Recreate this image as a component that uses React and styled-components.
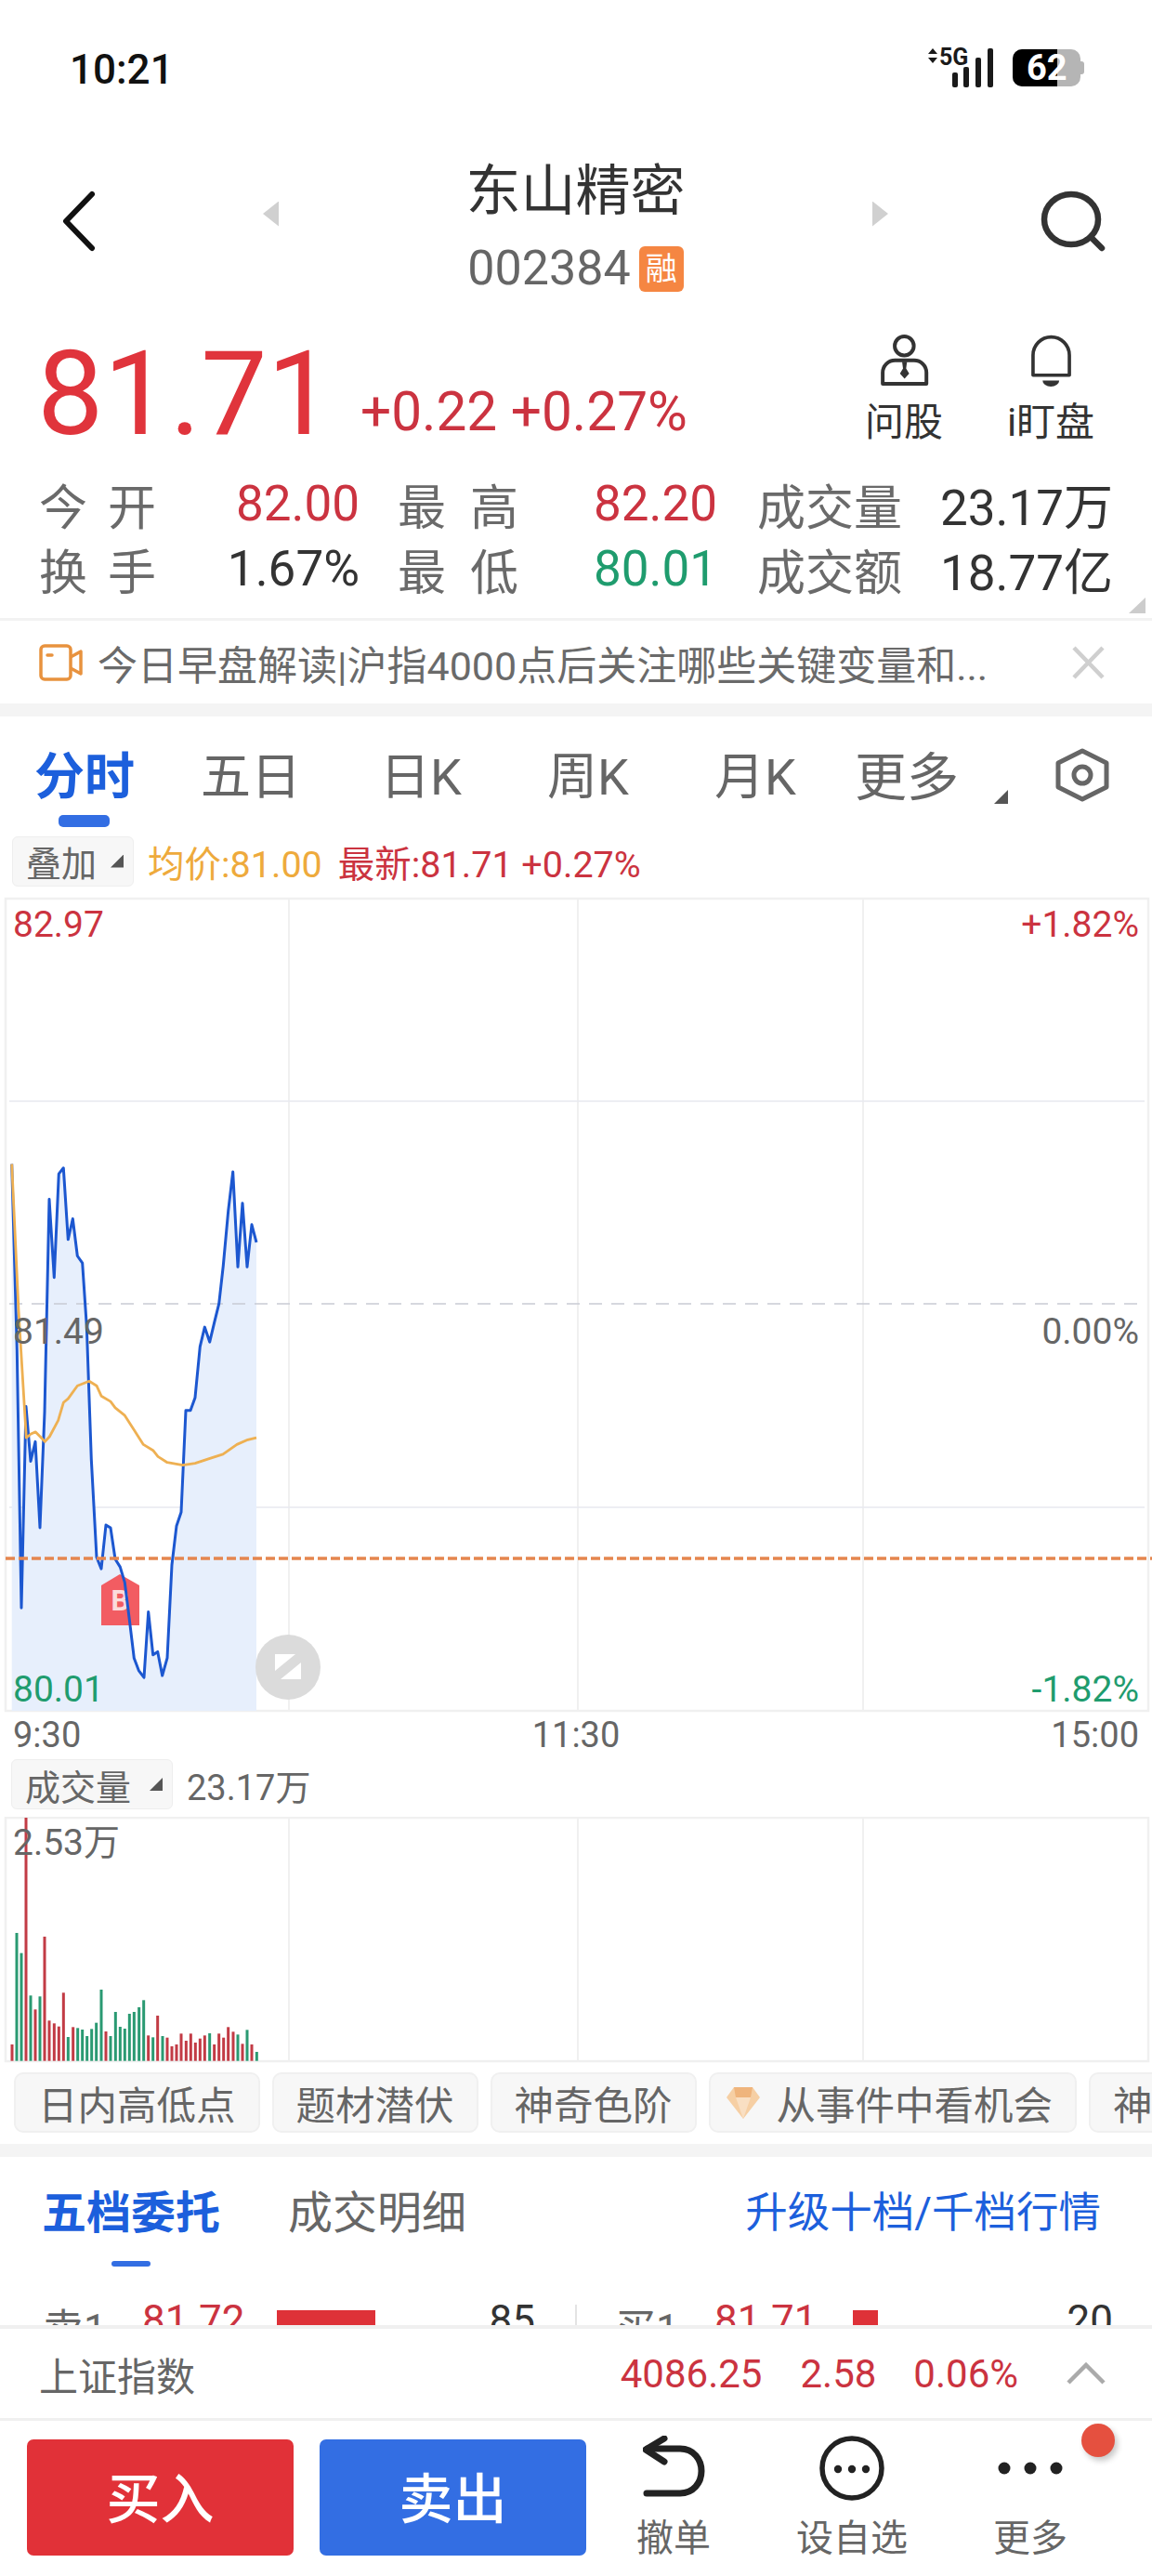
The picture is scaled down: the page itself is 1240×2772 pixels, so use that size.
import React from "react";
import styled, { createGlobalStyle } from "styled-components";

const RED = "#cb3340";
const GREEN = "#1f9c6e";
const BLUE = "#1c5fdc";
const GRAY = "#666";

const GlobalStyle = createGlobalStyle`
  html, body {
    margin: 0;
    padding: 0;
    background: #fff;
  }
  * {
    box-sizing: border-box;
  }
`;

const Page = styled.div`
  width: 1240px;
  height: 2772px;
  display: flex;
  flex-direction: column;
  overflow: hidden;
  background: #fff;
  color: #333;
  font-family: Roboto, "Noto Sans CJK SC", sans-serif;
`;

const Main = styled.div`
  height: 2502px;
  flex: none;
  overflow: hidden;
`;

/* status bar */
const StatusBar = styled.div`
  height: 146px;
  display: flex;
  align-items: center;
  justify-content: space-between;
  padding: 0 77px 0 75px;
`;

const Clock = styled.span`
  font-size: 44px;
  font-weight: 500;
  color: #111;
  padding-top: 4px;
`;

const StatusRight = styled.div`
  display: flex;
  align-items: center;
  gap: 19px;
`;

const Battery = styled.div`
  position: relative;
  width: 73px;
  height: 40px;
  border-radius: 10px;
  background: #b5b5b5;
  &::before {
    content: "";
    position: absolute;
    left: 0;
    top: 0;
    bottom: 0;
    width: 48px;
    border-radius: 10px 0 0 10px;
    background: #000;
  }
  &::after {
    content: "";
    position: absolute;
    right: -4px;
    top: 13px;
    width: 4px;
    height: 14px;
    border-radius: 0 3px 3px 0;
    background: #b5b5b5;
  }
`;

const BatteryText = styled.span`
  position: absolute;
  left: 15px;
  top: 0;
  line-height: 40px;
  color: #fff;
  font-size: 38px;
  font-weight: 700;
`;

/* header */
const Header = styled.div`
  height: 184px;
  display: flex;
  align-items: center;
  padding: 0 50px 0 66px;
`;

const NavArrow = styled.div`
  width: 17px;
  height: 27px;
  margin-left: ${(p) => p.$gap || 0}px;
  margin-top: -16px;
  background: #d0d0d0;
  clip-path: ${(p) =>
    p.$right ? "polygon(0 0, 100% 50%, 0 100%)" : "polygon(100% 0, 0 50%, 100% 100%)"};
`;

const TitleBlock = styled.div`
  flex: 1;
  display: flex;
  flex-direction: column;
  align-items: center;
  margin-top: 10px;
`;

const Title = styled.div`
  font-size: 59px;
  line-height: 72px;
  color: #333;
`;

const CodeRow = styled.div`
  display: flex;
  align-items: center;
  gap: 9px;
  margin-top: 20px;
`;

const Code = styled.span`
  font-size: 52px;
  line-height: 54px;
  color: ${GRAY};
`;

const MarginTag = styled.span`
  width: 48px;
  height: 49px;
  border-radius: 6px;
  background: #f58642;
  color: #fff;
  font-size: 34px;
  line-height: 49px;
  text-align: center;
`;

const SearchWrap = styled.div`
  margin-left: 164px;
  display: flex;
`;

/* price */
const PriceRow = styled.div`
  height: 177px;
  display: flex;
  padding: 0 0 0 40px;
`;

const PriceGroup = styled.div`
  display: flex;
  align-items: flex-end;
  gap: 29px;
  height: 148px;
  margin-top: 20px;
`;

const BigPrice = styled.span`
  font-size: 127px;
  line-height: 148px;
  color: #e0343c;
`;

const Change = styled.span`
  font-size: 58.5px;
  line-height: 60px;
  margin-bottom: 25px;
  color: ${RED};
`;

const Actions = styled.div`
  margin-left: auto;
  display: flex;
  padding: 29px 30px 0 0;
`;

const Action = styled.div`
  width: 158px;
  display: flex;
  flex-direction: column;
  align-items: center;
  gap: 10px;
  font-size: 42px;
  line-height: 56px;
  color: #333;
`;

/* stats */
const Stats = styled.div`
  position: relative;
  height: 158px;
  display: grid;
  grid-template-columns: 126px 219px 171px 214px 200px 226px;
  grid-auto-rows: 70px;
  padding-left: 42px;
  align-items: center;
  font-size: 53px;
`;

const StatLabel = styled.div`
  display: flex;
  justify-content: space-between;
  padding-left: ${(p) => p.$pad || 0}px;
  color: #6a6a6a;
  font-size: 52px;
`;

const StatValue = styled.div`
  text-align: right;
  color: ${(p) => p.$color || "#333"};
`;

const CornerMark = styled.div`
  position: absolute;
  right: 7px;
  top: 136px;
  width: 18px;
  height: 17px;
  background: #ccc;
  clip-path: polygon(100% 0, 100% 100%, 0 100%);
`;

/* banner */
const Banner = styled.div`
  height: 92px;
  display: flex;
  align-items: center;
  padding: 0 50px 0 42px;
  border-top: 3px solid #f2f2f2;
`;

const BannerText = styled.span`
  flex: 1;
  margin-left: 15px;
  font-size: 43px;
  color: #6a6a6a;
  white-space: nowrap;
`;

const GapBar = styled.div`
  height: 14px;
  background: #f4f4f4;
`;

/* period tabs */
const PeriodTabs = styled.div`
  height: 122px;
  display: grid;
  grid-template-columns: 179px 193px 180px 180px 151px 150px 65px 60px;
  align-items: center;
  padding: 0 0 2px 37px;
  svg {
    margin-top: 6px;
  }
`;

const PeriodTab = styled.div`
  position: relative;
  font-size: ${(p) => p.$size || 54}px;
  font-weight: ${(p) => (p.$active ? 700 : 400)};
  color: ${(p) => (p.$active ? BLUE : GRAY)};
  &::after {
    content: "";
    display: ${(p) => (p.$active ? "block" : "none")};
    position: absolute;
    left: 26px;
    bottom: -19px;
    width: 55px;
    height: 13px;
    border-radius: 5px;
    background: #336ee3;
  }
`;

const DownMark = styled.span`
  display: inline-block;
  flex: none;
  width: ${(p) => p.$size || 15}px;
  height: ${(p) => p.$size || 15}px;
  background: #555;
  clip-path: polygon(100% 0, 100% 100%, 0 100%);
`;

const TabMark = styled(DownMark)`
  align-self: end;
  margin-bottom: 26px;
`;

/* chart legend */
const LegendRow = styled.div`
  height: 67px;
  display: flex;
  align-items: center;
  padding-left: 13px;
  font-size: 39.5px;
`;

const SelectBtn = styled.div`
  height: 54px;
  display: flex;
  align-items: center;
  gap: ${(p) => p.$gap}px;
  padding: 0 10px 0 14px;
  background: #f7f7f7;
  border: 1px solid #eee;
  border-radius: 6px;
  font-size: 38px;
  color: ${GRAY};
`;

const LegendText = styled.span`
  margin-left: ${(p) => p.$gap}px;
  color: ${(p) => p.$color};
`;

const ChartBox = styled.div`
  position: relative;
  height: ${(p) => p.$h}px;
  svg {
    display: block;
  }
`;

const ChartLabel = styled.span`
  position: absolute;
  top: ${(p) => p.$top}px;
  ${(p) => (p.$right ? "right: 14px;" : "left: 14px;")}
  font-size: 39px;
  line-height: 44px;
  color: ${(p) => p.$color || GRAY};
`;

const TimeAxis = styled.div`
  height: 40px;
  display: grid;
  grid-template-columns: 1fr auto 1fr;
  padding: 0 14px;
  font-size: 38px;
  line-height: 44px;
  color: ${GRAY};
  span:last-child {
    text-align: right;
  }
`;

const VolumeHead = styled(LegendRow)`
  height: 70px;
  padding-left: 12px;
  font-size: 38px;
`;

/* chips */
const ChipRow = styled.div`
  height: 87px;
  display: flex;
  gap: 13px;
  padding: 10px 0 0 15px;
  overflow: hidden;
`;

const Chip = styled.div`
  flex: none;
  height: 65px;
  display: flex;
  align-items: center;
  gap: 17px;
  padding: 0 ${(p) => (p.$icon ? 24 : 24)}px 0 ${(p) => (p.$icon ? 16 : 24)}px;
  background: #f7f7f7;
  border: 2px solid #f0f0f0;
  border-radius: 10px;
  font-size: 42.5px;
  color: ${GRAY};
  white-space: nowrap;
`;

/* depth tabs */
const DepthTabs = styled.div`
  height: 129px;
  display: flex;
  padding: 0 55px 18px 45px;
  align-items: center;
  font-size: 48px;
`;

const DepthTab = styled.div`
  position: relative;
  margin-right: 73px;
  font-weight: ${(p) => (p.$active ? 700 : 400)};
  color: ${(p) => (p.$active ? BLUE : GRAY)};
  &::after {
    content: "";
    display: ${(p) => (p.$active ? "block" : "none")};
    position: absolute;
    left: 75px;
    bottom: -27px;
    width: 42px;
    height: 6px;
    border-radius: 3px;
    background: #336ee3;
  }
`;

const UpgradeLink = styled.div`
  margin-left: auto;
  font-size: 45.5px;
  color: #1c5fdc;
`;

const DepthRow = styled.div`
  display: grid;
  grid-template-columns: 107px 145px 228px 50px 86px 107px 149px 230px 50px;
  align-items: start;
  padding: 21px 0 0 46px;
  height: 90px;
  font-size: 44px;
`;

const DepthLabel = styled.span`
  color: ${GRAY};
`;

const DepthPrice = styled.span`
  color: ${RED};
`;

const DepthBar = styled.div`
  height: 20px;
  width: ${(p) => p.$w}px;
  margin-top: 15px;
  background: #de3138;
`;

const DepthQty = styled.span`
  color: #333;
  text-align: right;
`;

const DepthRule = styled.div`
  width: 2px;
  height: 30px;
  margin: 9px 0 0 43px;
  background: #e4e4e4;
`;

/* dock */
const Dock = styled.div`
  flex: 1;
  display: flex;
  flex-direction: column;
`;

const IndexRow = styled.div`
  height: 103px;
  display: flex;
  align-items: center;
  padding: 0 50px 0 42px;
  border-top: 4px solid #f0f0f0;
  border-bottom: 3px solid #f0f0f0;
  font-size: 42px;
`;

const IndexName = styled.span`
  color: ${GRAY};
  margin-right: auto;
`;

const IndexValue = styled.span`
  color: ${RED};
  margin-right: ${(p) => p.$gap}px;
`;

const TradeBar = styled.div`
  position: relative;
  flex: 1;
  display: flex;
  padding: 20px 0 0 29px;
`;

const TradeBtn = styled.div`
  width: 287px;
  height: 125px;
  margin-right: 28px;
  padding-top: 6px;
  border-radius: 7px;
  background: ${(p) => p.$bg};
  color: #fff;
  font-size: 58px;
  font-weight: 500;
  line-height: 119px;
  text-align: center;
`;

const TradeAction = styled.div`
  width: 192px;
  height: 134px;
  display: flex;
  flex-direction: column;
  align-items: center;
  justify-content: space-between;
  font-size: 40px;
  line-height: 46px;
  color: ${GRAY};
  svg {
    display: block;
  }
`;

const ActionsGroup = styled.div`
  display: flex;
  margin-left: -30px;
  margin-top: -4px;
`;

const RedDot = styled.div`
  position: absolute;
  left: 1164px;
  top: 3px;
  width: 36px;
  height: 36px;
  border-radius: 50%;
  background: #e5503f;
  box-shadow: 3px 4px 6px rgba(0, 0, 0, 0.22);
`;

/* drawings */
const SignalIcon = () => (
  <svg width="74" height="46" viewBox="998 51 74 46">
    <path d="M1005 53l5 6h-10zM1005 69l5-6h-10z" fill="#1a1a1a" />
    <text x="1012" y="71" fontFamily="Roboto" fontSize="25" fontWeight="700" fill="#1a1a1a">5G</text>
    <rect x="1026" y="79" width="6" height="16" rx="2" fill="#1a1a1a" />
    <rect x="1038" y="73" width="6" height="22" rx="2" fill="#1a1a1a" />
    <rect x="1051" y="63" width="6" height="32" rx="2" fill="#1a1a1a" />
    <rect x="1064" y="53" width="6" height="42" rx="2" fill="#1a1a1a" />
  </svg>
);

const BackIcon = () => (
  <svg width="37" height="66" viewBox="0 0 37 66" fill="none" stroke="#111" strokeWidth="6" strokeLinecap="round" strokeLinejoin="round">
    <path d="M33 4 L5 33 L33 62" />
  </svg>
);

const SearchIcon = () => (
  <svg width="70" height="66" viewBox="0 0 70 66" fill="none" stroke="#333" strokeWidth="6.5" strokeLinecap="round">
    <ellipse cx="33" cy="31" rx="29" ry="27" />
    <path d="M54 50 L66 62" />
  </svg>
);

const AskIcon = () => (
  <svg width="55" height="58" viewBox="140 55 165 175">
    <circle cx="222" cy="95" r="31" fill="none" stroke="#333" strokeWidth="12" />
    <path d="M152 218 V182 a40 40 0 0 1 40 -40 h62 a40 40 0 0 1 40 40 V218 Z" fill="none" stroke="#333" strokeWidth="12" strokeLinejoin="round" />
    <path d="M215 146 h16 l-3 22 l10 17 l-15 16 l-15 -16 l10 -17 Z" fill="#333" />
  </svg>
);

const BellIcon = () => (
  <svg width="47" height="58" viewBox="630 55 140 175">
    <path d="M641 190 V125 a59 59 0 0 1 118 0 V190 Z" fill="none" stroke="#333" strokeWidth="11" strokeLinejoin="round" />
    <path d="M672 207 h54 a27 20 0 0 1 -54 0 Z" fill="#333" />
  </svg>
);

const VideoIcon = () => (
  <svg width="48" height="42" viewBox="0 0 48 42" fill="none" stroke="#e8923e" strokeWidth="3.5" strokeLinejoin="round">
    <rect x="2" y="3" width="32" height="36" rx="4" />
    <path d="M34 15 L45 9 V33 L34 27" />
    <path d="M9 13 h5" strokeLinecap="round" />
  </svg>
);

const CloseIcon = () => (
  <svg width="37" height="36" viewBox="0 0 37 36" stroke="#cfcfcf" strokeWidth="4.5">
    <path d="M3 2 L34 34 M34 2 L3 34" />
  </svg>
);

const HexIcon = () => (
  <svg width="60" height="58" viewBox="0 0 60 58" fill="none" stroke="#666" strokeWidth="5" strokeLinejoin="round">
    <path d="M30 3 L56 16 V42 L30 55 L4 42 V16 Z" />
    <circle cx="30" cy="29" r="9" />
  </svg>
);

const DiamondIcon = () => (
  <svg width="38" height="36" viewBox="0 0 38 36">
    <path d="M9 1 H29 L37 12 L19 35 L1 12 Z" fill="#f6cfa4" />
    <path d="M9 1 H29 L27 12 H11 Z" fill="#efb47c" />
    <path d="M11 12 H27 L19 35 Z" fill="#f9dfc3" />
  </svg>
);

const ChevronUp = () => (
  <svg width="42" height="24" viewBox="0 0 42 24" fill="none" stroke="#aaa" strokeWidth="4.5">
    <path d="M2 22 L21 3 L40 22" />
  </svg>
);

const UndoIcon = () => (
  <svg width="67" height="66" viewBox="0 0 67 66" fill="none" stroke="#222" strokeWidth="7" strokeLinecap="round" strokeLinejoin="round">
    <path d="M23 3 L3 15 L23 28" />
    <path d="M5 14 H40 C55 14 63 26 63 38 C63 51 54 62 40 62 H4" />
  </svg>
);

const MoreCircleIcon = () => (
  <svg width="70" height="70" viewBox="0 0 70 70">
    <circle cx="35" cy="35" r="32" fill="none" stroke="#222" strokeWidth="5.5" />
    <circle cx="20" cy="36" r="4.2" fill="#222" />
    <circle cx="35" cy="36" r="4.2" fill="#222" />
    <circle cx="50" cy="36" r="4.2" fill="#222" />
  </svg>
);

const DotsIcon = () => (
  <svg width="70" height="70" viewBox="0 0 70 70" fill="#222">
    <circle cx="7" cy="35" r="6.5" />
    <circle cx="35" cy="35" r="6.5" />
    <circle cx="63" cy="35" r="6.5" />
  </svg>
);

/* traced from the reference, x/3 and 1200+y/2.376 give page coordinates */
const bluePts = [[38,125],[55,600],[69,1260],[84,745],[99,885],[114,835],[129,1055],[144,760],[159,215],[175,415],[190,150],[205,135],[220,318],[235,265],[250,360],[266,378],[280,540],[295,880],[312,1130],[327,1160],[342,1048],[357,1055],[372,1135],[388,1155],[403,1195],[418,1290],[433,1388],[448,1420],[465,1438],[479,1270],[494,1380],[509,1372],[524,1433],[540,1388],[555,1150],[570,1050],[585,1015],[600,755],[615,755],[630,722],[646,592],[661,542],[677,580],[692,530],[707,482],[721,385],[737,245],[752,145],[768,388],[783,225],[798,388],[813,280],[828,325]];
const avgPts = [[38,125],[60,500],[85,825],[100,815],[115,810],[130,822],[145,835],[160,822],[188,780],[205,735],[220,725],[250,692],[288,680],[312,692],[327,718],[357,732],[372,748],[403,768],[433,805],[463,842],[494,857],[510,873],[540,888],[590,895],[630,890],[680,877],[720,867],[765,842],[800,830],[828,825]];

const toPage = ([x, y]) => `${(x / 3).toFixed(1)},${(1200 + y / 2.376).toFixed(1)}`;
const bluePath = bluePts.map(toPage).join(" ");
const avgPath = avgPts.map(toPage).join(" ");

const volumes = [
  [39,1020,"r"],[54,660,"g"],[69,725,"g"],[84,288,"r"],[99,862,"g"],[114,907,"r"],[129,865,"g"],[144,672,"r"],[159,943,"r"],[175,952,"r"],[190,962,"r"],[205,853,"r"],[220,996,"g"],[236,964,"r"],[251,967,"g"],[266,972,"g"],[281,993,"g"],[296,970,"g"],[311,950,"g"],[327,843,"g"],[342,978,"r"],[357,993,"g"],[373,915,"g"],[388,963,"g"],[403,969,"g"],[418,921,"g"],[433,915,"g"],[449,900,"g"],[464,877,"g"],[479,991,"r"],[494,997,"g"],[509,927,"r"],[525,993,"g"],[540,998,"r"],[555,1026,"r"],[570,1020,"r"],[585,985,"r"],[601,1008,"r"],[616,985,"r"],[631,1014,"r"],[646,1001,"r"],[661,991,"r"],[677,984,"g"],[692,1020,"r"],[707,985,"r"],[722,998,"r"],[737,964,"r"],[753,979,"r"],[768,988,"g"],[783,1018,"r"],[798,973,"g"],[813,1020,"r"],[829,1044,"g"],
];

const PriceChart = () => (
  <svg width="1240" height="885" viewBox="0 960 1240 885">
    <rect x="6" y="967" width="1230" height="874" fill="none" stroke="#f0f0f0" strokeWidth="2.5" />
    <path d="M311 967V1841M622 967V1841M929 967V1841" stroke="#f0f0f0" strokeWidth="2" />
    <path d="M10 1185H1232M10 1622H1232" stroke="#e8e9ef" strokeWidth="1.5" />
    <polygon points={`12.7,1841 ${bluePath} 276,1841`} fill="#e7effc" />
    <path d="M10 1403H1232" stroke="#c9ccd4" strokeWidth="1.5" strokeDasharray="14 10" />
    <path d="M109 1706 L129 1694 L150 1706 V1749 H109 Z" fill="#f25c62" />
    <text x="129.5" y="1733" textAnchor="middle" fontFamily="Roboto" fontSize="31" fontWeight="700" fill="#fbdcdc">B</text>
    <polyline points={bluePath} fill="none" stroke="#1c57d0" strokeWidth="3" strokeLinejoin="round" />
    <polyline points={avgPath} fill="none" stroke="#eeb052" strokeWidth="2.8" strokeLinejoin="round" />
    <path d="M6 1677H1240" stroke="#e5864f" strokeWidth="3.6" strokeDasharray="10 4" />
    <circle cx="310" cy="1794" r="35" fill="#d9d9d9" opacity="0.95" />
    <path d="M296 1780H318L296 1798ZM324 1789V1807H302Z" fill="#fff" />
  </svg>
);

const VolumeChart = () => (
  <svg width="1240" height="265" viewBox="0 1955 1240 265">
    <rect x="6" y="1956" width="1230" height="262" fill="none" stroke="#f0f0f0" strokeWidth="2.5" />
    <path d="M311 1956V2218M622 1956V2218M929 1956V2218" stroke="#f0f0f0" strokeWidth="2" />
    {volumes.map(([x, y, c]) => (
      <rect
        key={x}
        x={x / 3 - 1.5}
        y={1860 + y / 3}
        width="3"
        height={2217.7 - (1860 + y / 3)}
        fill={c === "r" ? "#c23b45" : "#2a9a72"}
      />
    ))}
  </svg>
);

const App = () => (
  <Page>
    <GlobalStyle />
    <Main>
      <StatusBar>
        <Clock>10:21</Clock>
        <StatusRight>
          <SignalIcon />
          <Battery>
            <BatteryText>62</BatteryText>
          </Battery>
        </StatusRight>
      </StatusBar>

      <Header>
        <BackIcon />
        <NavArrow $gap={180} />
        <TitleBlock>
          <Title>东山精密</Title>
          <CodeRow>
            <Code>002384</Code>
            <MarginTag>融</MarginTag>
          </CodeRow>
        </TitleBlock>
        <NavArrow $right />
        <SearchWrap>
          <SearchIcon />
        </SearchWrap>
      </Header>

      <PriceRow>
        <PriceGroup>
          <BigPrice>81.71</BigPrice>
          <Change>+0.22 +0.27%</Change>
        </PriceGroup>
        <Actions>
          <Action>
            <AskIcon />
            问股
          </Action>
          <Action>
            <BellIcon />
            i盯盘
          </Action>
        </Actions>
      </PriceRow>

      <Stats>
        <StatLabel><span>今</span><span>开</span></StatLabel>
        <StatValue $color={RED}>82.00</StatValue>
        <StatLabel $pad={41}><span>最</span><span>高</span></StatLabel>
        <StatValue $color={RED}>82.20</StatValue>
        <StatLabel $pad={43}>成交量</StatLabel>
        <StatValue>23.17万</StatValue>
        <StatLabel><span>换</span><span>手</span></StatLabel>
        <StatValue>1.67%</StatValue>
        <StatLabel $pad={41}><span>最</span><span>低</span></StatLabel>
        <StatValue $color={GREEN}>80.01</StatValue>
        <StatLabel $pad={43}>成交额</StatLabel>
        <StatValue>18.77亿</StatValue>
        <CornerMark />
      </Stats>

      <Banner>
        <VideoIcon />
        <BannerText>今日早盘解读|沪指4000点后关注哪些关键变量和...</BannerText>
        <CloseIcon />
      </Banner>
      <GapBar />

      <PeriodTabs>
        <PeriodTab $active>分时</PeriodTab>
        <PeriodTab>五日</PeriodTab>
        <PeriodTab>日K</PeriodTab>
        <PeriodTab>周K</PeriodTab>
        <PeriodTab>月K</PeriodTab>
        <PeriodTab $size={56}>更多</PeriodTab>
        <TabMark />
        <HexIcon />
      </PeriodTabs>

      <LegendRow>
        <SelectBtn $gap={15}>
          叠加
          <DownMark $size={14} />
        </SelectBtn>
        <LegendText $gap={15} $color="#eeaa3c">均价:81.00</LegendText>
        <LegendText $gap={17} $color={RED}>最新:81.71 +0.27%</LegendText>
      </LegendRow>

      <ChartBox $h={885}>
        <PriceChart />
        <ChartLabel $top={13} $color={RED}>82.97</ChartLabel>
        <ChartLabel $top={13} $right $color={RED}>+1.82%</ChartLabel>
        <ChartLabel $top={451}>81.49</ChartLabel>
        <ChartLabel $top={451} $right>0.00%</ChartLabel>
        <ChartLabel $top={836} $color={GREEN}>80.01</ChartLabel>
        <ChartLabel $top={836} $right $color={GREEN}>-1.82%</ChartLabel>
      </ChartBox>

      <TimeAxis>
        <span>9:30</span>
        <span>11:30</span>
        <span>15:00</span>
      </TimeAxis>

      <VolumeHead>
        <SelectBtn $gap={20}>
          成交量
          <DownMark $size={14} />
        </SelectBtn>
        <LegendText $gap={15} $color={GRAY}>23.17万</LegendText>
      </VolumeHead>

      <ChartBox $h={265}>
        <VolumeChart />
        <ChartLabel $top={6}>2.53万</ChartLabel>
      </ChartBox>

      <ChipRow>
        <Chip>日内高低点</Chip>
        <Chip>题材潜伏</Chip>
        <Chip>神奇色阶</Chip>
        <Chip $icon>
          <DiamondIcon />
          从事件中看机会
        </Chip>
        <Chip>神奇九转</Chip>
      </ChipRow>
      <GapBar />

      <DepthTabs>
        <DepthTab $active>五档委托</DepthTab>
        <DepthTab>成交明细</DepthTab>
        <UpgradeLink>升级十档/千档行情</UpgradeLink>
      </DepthTabs>

      <DepthRow>
        <DepthLabel>卖1</DepthLabel>
        <DepthPrice>81.72</DepthPrice>
        <DepthBar $w={106} />
        <DepthQty>85</DepthQty>
        <DepthRule />
        <DepthLabel>买1</DepthLabel>
        <DepthPrice>81.71</DepthPrice>
        <DepthBar $w={27} />
        <DepthQty>20</DepthQty>
      </DepthRow>
    </Main>

    <Dock>
      <IndexRow>
        <IndexName>上证指数</IndexName>
        <IndexValue $gap={41}>4086.25</IndexValue>
        <IndexValue $gap={40}>2.58</IndexValue>
        <IndexValue $gap={52}>0.06%</IndexValue>
        <ChevronUp />
      </IndexRow>
      <TradeBar>
        <TradeBtn $bg="#e13138">买入</TradeBtn>
        <TradeBtn $bg="#336ee3">卖出</TradeBtn>
        <ActionsGroup>
          <TradeAction>
            <UndoIcon />
            撤单
          </TradeAction>
          <TradeAction>
            <MoreCircleIcon />
            设自选
          </TradeAction>
          <TradeAction>
            <DotsIcon />
            更多
          </TradeAction>
        </ActionsGroup>
        <RedDot />
      </TradeBar>
    </Dock>
  </Page>
);

export default App;
